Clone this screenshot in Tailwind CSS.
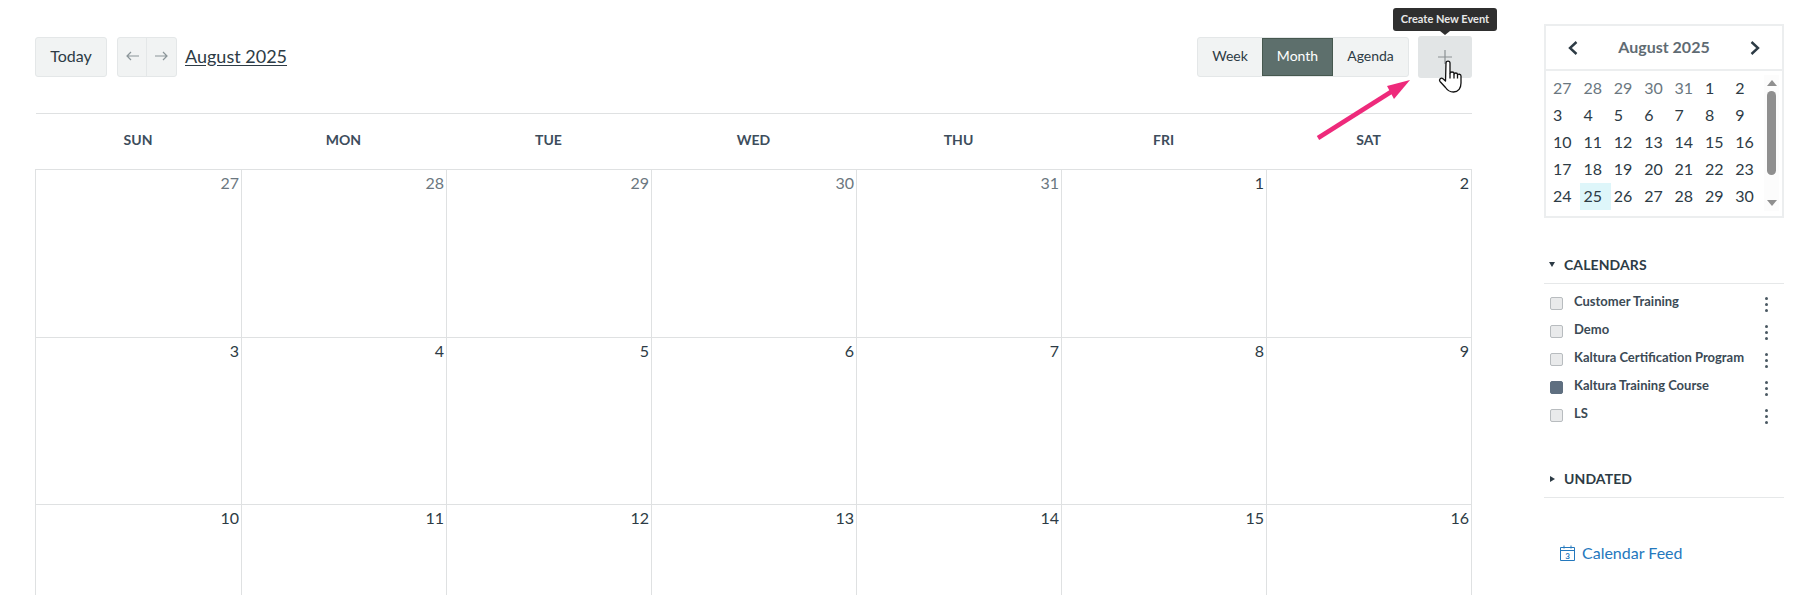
<!DOCTYPE html>
<html lang="en">
<head>
    <meta charset="UTF-8">
    <title>Calendar</title>
    <script src="https://cdn.jsdelivr.net/npm/@tailwindcss/browser@4"></script>
</head>
<body class="bg-white text-[#2d3b45] font-['Lato','Noto_Sans',sans-serif]">
    <div class="relative flex h-[595px] w-[1809px] overflow-hidden">
        <!-- main calendar -->
        <main class="ml-[35px] w-[1437px] shrink-0 pt-[36px]">
            <div class="flex h-[42px] items-center">
                <button class="h-[40px] w-[72px] rounded-[3px] border border-[#e4e7e8] bg-[#f1f3f3] pb-[2px] text-base text-[#2d3b45]">Today</button>
                <div class="ml-[10px] flex h-[40px] w-[60px] rounded-[3px] border border-[#e4e7e8] bg-[#f1f3f3]">
                    <div class="flex w-[29px] items-center justify-center border-r border-[#e4e7e8] pb-[3px]">
                        <svg width="13" height="10" viewBox="0 0 13 10" fill="none" stroke="#8b9599" stroke-width="1.2"><path d="M13 5H1M5 1 1 5l4 4"/></svg>
                    </div>
                    <div class="flex flex-1 items-center justify-center pb-[3px]">
                        <svg width="13" height="10" viewBox="0 0 13 10" fill="none" stroke="#8b9599" stroke-width="1.2"><path d="M0 5h12M8 1l4 4-4 4"/></svg>
                    </div>
                </div>
                <a class="ml-[8px] mb-[3px] text-[18px] leading-none text-[#2d3b45] underline underline-offset-2">August 2025</a>
                <div class="ml-auto flex h-[40px] items-stretch rounded-[3px] border border-[#e4e7e8] bg-[#f1f3f3] text-sm">
                    <div class="flex w-[64px] items-center justify-center pb-[2px]">Week</div>
                    <div class="flex w-[71px] items-center justify-center border border-[#46584f] bg-[#5d6f6c] pb-[2px] text-white">Month</div>
                    <div class="flex w-[75px] items-center justify-center pb-[2px]">Agenda</div>
                </div>
                <div class="ml-[9px] flex h-[42px] w-[54px] items-center justify-center rounded-[3px] bg-[#e2e5e6]">
                    <svg width="14" height="14" viewBox="0 0 14 14" stroke="#8b9194" stroke-width="1.2"><path d="M7 0v14M0 7h14"/></svg>
                </div>
            </div>

            <div class="mt-[35px] ml-px border-t border-[#dfe1e2]"></div>
            <div id="weekdays" class="grid h-[55px] grid-cols-[206px_repeat(6,205px)] items-center pb-[3px] text-center text-sm font-bold text-[#3d4d5c]"></div>
            <div id="month" class="grid grid-cols-[206px_repeat(6,205px)] grid-rows-[168px_167px_167px] border-t border-r border-[#dfe1e2]"></div>
        </main>

        <!-- sidebar -->
        <aside class="ml-[72px] w-[240px] shrink-0 pt-[24px]">
            <div class="h-[194px] border-2 border-[#eceeef]">
                <div class="flex h-[45px] items-center justify-between border-b-2 border-[#eceeef] px-[22px]">
                    <svg width="10" height="14" viewBox="0 0 10 14" fill="none" stroke="#2d3b45" stroke-width="2.4"><path d="M8.500 1 2 7l6.500 6"/></svg>
                    <span class="pb-[1px] text-base font-bold text-[#5f6b73]">August 2025</span>
                    <svg width="10" height="14" viewBox="0 0 10 14" fill="none" stroke="#2d3b45" stroke-width="2.4"><path d="M1.500 1 8 7l-6.500 6"/></svg>
                </div>
                <div class="relative pl-[4px] pt-[4px]">
                    <div id="mini" class="grid w-[213px] grid-cols-[repeat(7,30.4px)] text-base leading-none"></div>
                    <div class="absolute top-[4px] right-[3px] flex h-[136px] w-[15px] flex-col items-center bg-[#fcfcfc] py-[5px]">
                        <div class="h-0 w-0 border-x-[5px] border-b-[6px] border-x-transparent border-b-[#8f8f8f]"></div>
                        <div class="mt-[5px] h-[84px] w-[9px] rounded-full bg-[#8f8f8f]"></div>
                        <div class="mt-auto h-0 w-0 border-x-[5px] border-t-[6px] border-x-transparent border-t-[#8f8f8f]"></div>
                    </div>
                </div>
            </div>

            <div class="mt-[37px] flex h-[29px] items-center border-b border-[#e6e8e9] pb-[9px] pl-[5px]">
                <span class="h-0 w-0 border-x-[3.5px] border-t-[5px] border-x-transparent border-t-[#2d3b45]"></span>
                <span class="ml-[9px] text-sm font-bold tracking-[0.1px]">CALENDARS</span>
            </div>
            <ul id="calendars" class="pt-[5px] text-[13px] font-bold text-[#3b4a55]"></ul>

            <div class="mt-[40px] flex h-[29px] items-center border-b border-[#e6e8e9] pb-[9px] pl-[6px]">
                <span class="h-0 w-0 border-y-[3.5px] border-l-[5px] border-y-transparent border-l-[#2d3b45]"></span>
                <span class="ml-[9px] text-sm font-bold tracking-[0.1px]">UNDATED</span>
            </div>

            <a class="mt-[43px] ml-[16px] flex items-center text-base text-[#2478bd]">
                <svg width="15" height="16" viewBox="0 0 15 16" fill="none" stroke="#2478bd" stroke-width="1"><path d="M.5 2.500h14v13H.5zM.5 5.500h14M4 .5v3M11 .5v3"/><text x="7.500" y="13.500" text-anchor="middle" font-size="8" font-weight="700" fill="#2478bd" stroke="none">3</text></svg>
                <span class="ml-[7px]">Calendar Feed</span>
            </a>
        </aside>

        <!-- tooltip, annotation arrow and pointer over the page -->
        <div class="absolute top-[8px] left-[1393px] flex h-[23px] w-[104px] items-center justify-center rounded-[3px] bg-[#2f2f2f] text-[11px] font-bold text-[#e8e8e8]">
            Create New Event
            <span class="absolute top-full left-[47px] h-0 w-0 border-x-[5px] border-t-[4px] border-x-transparent border-t-[#2f2f2f]"></span>
        </div>
        <svg class="absolute top-[75px] left-[1310px]" width="105" height="70" viewBox="0 0 105 70">
            <path d="M8 63 88 12.500" stroke="#ee2a7b" stroke-width="4.500" fill="none"/>
            <path d="M100 5 77 11 84 24z" fill="#ee2a7b"/>
        </svg>
        <svg class="absolute top-[60px] left-[1437px]" width="26" height="33" viewBox="0 0 26 33" fill="#fff" stroke="#111" stroke-width="1.300" stroke-linejoin="round">
            <path d="M9 3c0-2.500 4-2.500 4 0v10.500c0-2 4-2 4 0v1c0-2 3.500-2 3.500 0v1c0-2 3.500-1.500 3.500.5v7c0 5-2.500 9-7.500 9-4 0-6-1.500-8-4.500l-5.500-6c-1.500-2 1-4.500 3-2.800l2.500 2.300z"/>
            <path d="M13 13.500v5M17 14.500v4M20.500 15.500v3" fill="none"/>
        </svg>
    </div>

    <script>
        const weekdays = ['SUN', 'MON', 'TUE', 'WED', 'THU', 'FRI', 'SAT'];
        const days = [27, 28, 29, 30, 31, 1, 2, 3, 4, 5, 6, 7, 8, 9, 10, 11, 12, 13, 14, 15, 16];
        const miniDays = [27, 28, 29, 30, 31, 1, 2, 3, 4, 5, 6, 7, 8, 9, 10, 11, 12, 13, 14, 15, 16, 17, 18, 19, 20, 21, 22, 23, 24, 25, 26, 27, 28, 29, 30];
        const calendars = [
            ['Customer Training', false],
            ['Demo', false],
            ['Kaltura Certification Program', false],
            ['Kaltura Training Course', true],
            ['LS', false],
        ];

        document.getElementById('weekdays').innerHTML = weekdays.map(d => `<div>${d}</div>`).join('');

        // first five cells belong to July, so they are muted
        document.getElementById('month').innerHTML = days.map((d, i) => `
            <div class="border-b border-l border-[#dfe1e2] pt-[1px] pr-[2px] text-right text-base ${i < 5 ? 'text-[#6b7780]' : 'text-[#2d3b45]'}">${d}</div>
        `).join('');

        document.getElementById('mini').innerHTML = miniDays.map((d, i) => `
            <div class="flex h-[27px] items-center pb-[2px] pl-[3px] ${i < 5 ? 'text-[#6b7780]' : 'text-[#2d3b45]'} ${i === 29 ? 'bg-[#def6fa]' : ''}">${d}</div>
        `).join('');

        document.getElementById('calendars').innerHTML = calendars.map(([name, on]) => `
            <li class="flex h-[28px] items-center pl-[6px]">
                <span class="h-[13px] w-[13px] rounded-[2px] border ${on ? 'border-[#5f6f80] bg-[#5f6f80]' : 'border-[#b8bcbf] bg-[#e9eaeb]'}"></span>
                <span class="ml-[11px] mb-[3px]">${name}</span>
                <span class="mt-[3px] ml-auto mr-[16px] flex flex-col gap-[3px]">
                    <i class="block h-[3px] w-[3px] rounded-full bg-[#4a5862]"></i>
                    <i class="block h-[3px] w-[3px] rounded-full bg-[#4a5862]"></i>
                    <i class="block h-[3px] w-[3px] rounded-full bg-[#4a5862]"></i>
                </span>
            </li>
        `).join('');
    </script>
</body>
</html>
